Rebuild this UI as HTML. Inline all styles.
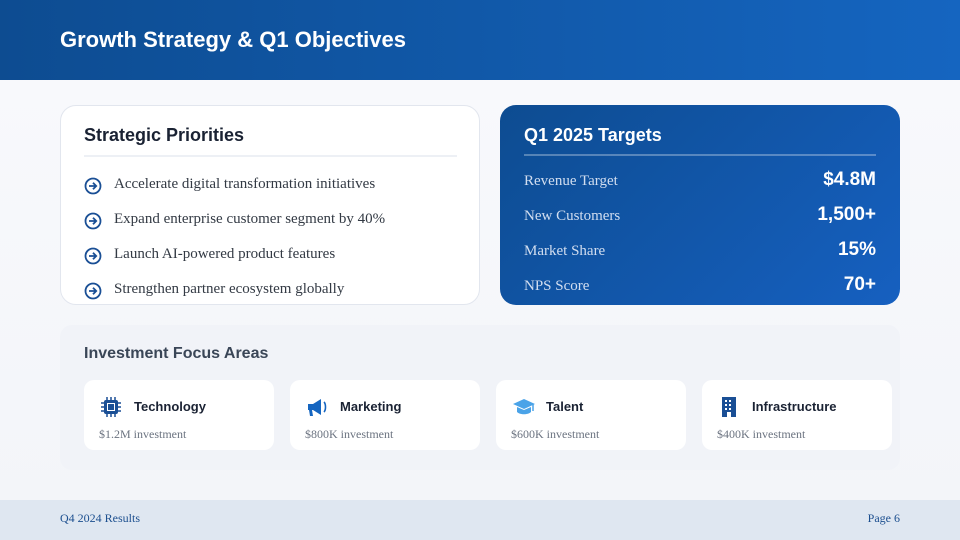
<!DOCTYPE html>
<html><head><meta charset="utf-8"><style>
*{margin:0;padding:0;box-sizing:border-box}
body{width:960px;height:540px;overflow:hidden;background:#f4f6fa;font-family:"Liberation Sans",sans-serif;position:relative}
.hdr{position:absolute;left:0;top:0;width:960px;height:80px;background:linear-gradient(90deg,#0d4c91,#1565c0)}
.hdr h1{position:absolute;left:60px;top:27px;color:#fff;font-size:22px;font-weight:bold}
.main{position:absolute;left:0;top:80px;width:960px;height:420px;background:linear-gradient(180deg,#f8f9fc,#f3f5f9)}
.card1{position:absolute;left:60px;top:105px;width:420px;height:200px;background:#fff;border:1px solid #e2e6ee;border-radius:16px}
.card1 h2{position:absolute;left:23px;top:19px;font-size:18px;color:#1a2233;font-weight:bold}
.card1 .ln{position:absolute;left:23px;top:49px;width:373px;height:2px;background:#edf0f5}
.it{position:absolute;left:84px;font-family:"Liberation Serif",serif;font-size:15px;color:#333a44}
.it svg{position:absolute;left:0;top:1px}
.it span{position:absolute;left:30px;top:0;white-space:nowrap}
.card2{position:absolute;left:500px;top:105px;width:400px;height:200px;background:linear-gradient(135deg,#0d4c91,#1660c0);border-radius:16px;color:#fff}
.card2 h2{position:absolute;left:24px;top:20px;font-size:18px;font-weight:bold}
.card2 .ln{position:absolute;left:24px;top:49px;width:352px;height:2px;background:rgba(255,255,255,.3)}
.row{position:absolute;left:24px;width:352px}
.row .l{position:absolute;left:0;top:0;font-family:"Liberation Serif",serif;font-size:15px;color:#d2def0;white-space:nowrap}
.row .v{position:absolute;right:0;top:-4px;font-size:19px;font-weight:bold}
.inv{position:absolute;left:60px;top:325px;width:840px;height:145px;background:#f1f3f8;border-radius:12px}
.inv h3{position:absolute;left:24px;top:20px;font-size:16px;color:#3a4657;font-weight:bold}
.ic{position:absolute;top:380px;width:190px;height:70px;background:#fff;border-radius:10px}
.ic svg{position:absolute;left:16px;top:16px}
.ic b{position:absolute;left:50px;top:19px;font-size:13px;color:#1a2233}
.ic i{position:absolute;left:15px;top:47px;font-style:normal;font-family:"Liberation Serif",serif;font-size:12px;color:#6b7380}
.ftr{position:absolute;left:0;top:500px;width:960px;height:40px;background:#dfe7f1}
.ftr span{position:absolute;top:11px;font-family:"Liberation Serif",serif;font-size:12px;color:#1c4f8f}
</style></head><body>
<div class="main"></div>
<div class="hdr"><h1>Growth Strategy &amp; Q1 Objectives</h1></div>

<div class="card1"><h2>Strategic Priorities</h2><div class="ln"></div></div>
<div class="it" style="top:176px"><svg width="18" height="18" viewBox="0 0 18 18"><circle cx="9" cy="9" r="7.5" fill="none" stroke="#1a4f95" stroke-width="1.8"/><path d="M5 9h7M9 5.8L12.2 9 9 12.2" fill="none" stroke="#1a4f95" stroke-width="1.8"/></svg><span>Accelerate digital transformation initiatives</span></div>
<div class="it" style="top:211px"><svg width="18" height="18" viewBox="0 0 18 18"><circle cx="9" cy="9" r="7.5" fill="none" stroke="#1a4f95" stroke-width="1.8"/><path d="M5 9h7M9 5.8L12.2 9 9 12.2" fill="none" stroke="#1a4f95" stroke-width="1.8"/></svg><span>Expand enterprise customer segment by 40%</span></div>
<div class="it" style="top:246px"><svg width="18" height="18" viewBox="0 0 18 18"><circle cx="9" cy="9" r="7.5" fill="none" stroke="#1a4f95" stroke-width="1.8"/><path d="M5 9h7M9 5.8L12.2 9 9 12.2" fill="none" stroke="#1a4f95" stroke-width="1.8"/></svg><span>Launch AI-powered product features</span></div>
<div class="it" style="top:281px"><svg width="18" height="18" viewBox="0 0 18 18"><circle cx="9" cy="9" r="7.5" fill="none" stroke="#1a4f95" stroke-width="1.8"/><path d="M5 9h7M9 5.8L12.2 9 9 12.2" fill="none" stroke="#1a4f95" stroke-width="1.8"/></svg><span>Strengthen partner ecosystem globally</span></div>

<div class="card2"><h2>Q1 2025 Targets</h2><div class="ln"></div>
<div class="row" style="top:68px"><span class="l">Revenue Target</span><span class="v">$4.8M</span></div>
<div class="row" style="top:103px"><span class="l">New Customers</span><span class="v">1,500+</span></div>
<div class="row" style="top:138px"><span class="l">Market Share</span><span class="v">15%</span></div>
<div class="row" style="top:173px"><span class="l">NPS Score</span><span class="v">70+</span></div>
</div>

<div class="inv"><h3>Investment Focus Areas</h3></div>
<div class="ic" style="left:84px"><svg width="22" height="22" viewBox="0 0 22 22"><rect x="4" y="4" width="14" height="14" rx="2" fill="#1a4f95"/><rect x="7" y="7" width="8" height="8" fill="#fff"/><rect x="8" y="8" width="6" height="6" fill="#1a4f95"/><path d="M7 1v3M11 1v3M15 1v3M7 18v3M11 18v3M15 18v3M1 7h3M1 11h3M1 15h3M18 7h3M18 11h3M18 15h3" stroke="#1a4f95" stroke-width="1.5"/></svg><b>Technology</b><i>$1.2M investment</i></div>
<div class="ic" style="left:290px"><svg width="22" height="22" viewBox="0 0 22 22"><path d="M2 8h5l8-5v16l-8-5H6l1 6H4l-1-6H2z" fill="#1565c0"/><path d="M18 6c2 2 2 8 0 10" fill="none" stroke="#1565c0" stroke-width="1.6"/></svg><b>Marketing</b><i>$800K investment</i></div>
<div class="ic" style="left:496px"><svg width="24" height="22" viewBox="0 0 24 22"><path d="M12 3L1 8l11 5 11-5z" fill="#4aa3e8"/><path d="M5 11v5c3 3 11 3 14 0v-5l-7 3z" fill="#4aa3e8"/><path d="M21 8v7" stroke="#4aa3e8" stroke-width="1.5"/></svg><b>Talent</b><i>$600K investment</i></div>
<div class="ic" style="left:702px"><svg width="22" height="22" viewBox="0 0 22 22"><rect x="4" y="1" width="14" height="20" fill="#1a4f95"/><path d="M7 4h2v2H7zM11 4h2v2h-2zM7 8h2v2H7zM11 8h2v2h-2zM7 12h2v2H7zM11 12h2v2h-2zM9 16h4v5H9z" fill="#fff"/></svg><b>Infrastructure</b><i>$400K investment</i></div>

<div class="ftr"><span style="left:60px">Q4 2024 Results</span><span style="right:60px">Page 6</span></div>
</body></html>
